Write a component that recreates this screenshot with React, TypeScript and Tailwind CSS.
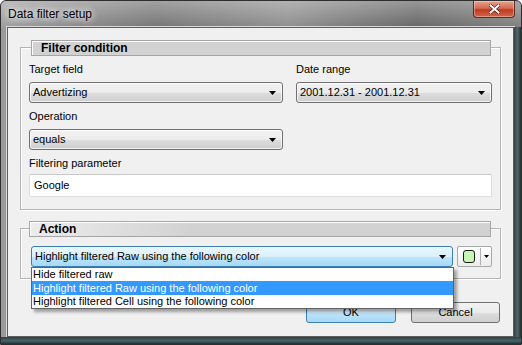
import React from "react";

const font = "font-['Liberation_Sans',Arial,sans-serif]";

function Arrow() {
  return (
    <svg width="7" height="4" viewBox="0 0 7 4" aria-hidden="true">
      <path d="M0 0h7L3.5 4z" fill="#000" />
    </svg>
  );
}

function Combo({ value }: { value: string }) {
  return (
    <div className="flex h-[21px] items-center justify-between rounded-[3px] border border-[#707070] bg-[linear-gradient(180deg,#f3f3f3_0%,#ebebeb_50%,#dddddd_51%,#cfcfcf_100%)] pl-[3px] pr-[6px] shadow-[inset_0_0_0_1px_rgba(255,255,255,0.7)]">
      <span className="text-[11px] leading-none text-black">{value}</span>
      <Arrow />
    </div>
  );
}

function GroupHeader({ title, className }: { title: string; className: string }) {
  return (
    <div
      className={`flex items-center border border-[#a5a5a5] bg-[#d2d2d2] pl-[9px] text-[12px] font-bold leading-none text-black shadow-[inset_1px_1px_0_#ffffff] ${className}`}
    >
      {title}
    </div>
  );
}

export default function App() {
  return (
    <div className={`${font} flex h-[345px] w-[522px] flex-col overflow-hidden rounded-t-[6px] border border-[#2e2e2e] bg-[linear-gradient(90deg,#9a9a9a,#6f6f6f_30%,#8a8a8a_55%,#5f5f5f_80%,#7a7a7a)]`}>
      {/* title bar */}
      <div className="flex h-[26px] shrink-0 items-start justify-between bg-[linear-gradient(180deg,rgba(255,255,255,0.35),rgba(255,255,255,0.05))]">
        <span className="pl-[7px] pt-[7px] text-[12px] leading-none text-black [text-shadow:0_0_6px_#fff,0_0_8px_#fff]">
          Data filter setup
        </span>
        <div className="mr-[6px] flex h-[17px] w-[42px] items-center justify-center rounded-b-[4px] border border-t-0 border-[#5a2a22] bg-[linear-gradient(180deg,#e7a38f_0%,#d46a52_45%,#c0391f_55%,#d2674c_100%)] shadow-[inset_0_0_0_1px_rgba(255,255,255,0.35)]">
          <svg width="11" height="10" viewBox="0 0 11 10" aria-hidden="true">
            <path d="M1.5 1.5l8 7M9.5 1.5l-8 7" stroke="#4a1a12" strokeWidth="3.2" strokeLinecap="square" />
            <path d="M1.5 1.5l8 7M9.5 1.5l-8 7" stroke="#ffffff" strokeWidth="2" strokeLinecap="square" />
          </svg>
        </div>
      </div>

      <div className="flex min-h-0 flex-1">
        <div className="w-[6px] shrink-0" />
        {/* client area */}
        <div className="flex flex-1 flex-col border border-[#5e5e5e] bg-[#f0f0f0] px-[12px] pt-[19px] shadow-[0_0_0_1px_#d9d9d9]">
          {/* Filter condition */}
          <div className="border border-[#b5b5b5] pb-[12px] shadow-[inset_1px_1px_0_#fff,1px_1px_0_#fff]">
            <GroupHeader title="Filter condition" className="-mt-[8px] ml-[10px] mr-[9px] h-[16px]" />
            <div className="flex gap-[13px] px-[8px]">
              <div className="flex w-[254px] flex-col">
                <div className="mt-[5px] h-[16px] text-[11px] leading-[16px] text-black">Target field</div>
                <div className="mt-[5px]">
                  <Combo value="Advertizing" />
                </div>
                <div className="mt-[5px] h-[16px] text-[11px] leading-[16px] text-black">Operation</div>
                <div className="mt-[5px]">
                  <Combo value="equals" />
                </div>
              </div>
              <div className="flex flex-1 flex-col">
                <div className="mt-[5px] h-[16px] text-[11px] leading-[16px] text-black">Date range</div>
                <div className="mt-[5px]">
                  <Combo value="2001.12.31 - 2001.12.31" />
                </div>
              </div>
            </div>
            <div className="px-[8px]">
              <div className="mt-[5px] h-[16px] text-[11px] leading-[16px] text-black">Filtering parameter</div>
              <div className="mt-[3px] flex h-[23px] items-center rounded-[2px] border border-[#dcdcdc] border-t-[#c9c9c9] bg-white pl-[4px] text-[11px] text-black">
                Google
              </div>
            </div>
          </div>

          {/* Action */}
          <div className="mt-[18px] border border-[#b5b5b5] pb-[11px] shadow-[inset_1px_1px_0_#fff,1px_1px_0_#fff]">
            <GroupHeader title="Action" className="-mt-[8px] ml-[8px] mr-[9px] h-[16px] bg-[linear-gradient(90deg,#ececec,#d2d2d2_35%)]" />
            <div className="mt-[9px] flex gap-[4px] pl-[10px]">
              <div className="relative w-[422px]">
                <div className="flex h-[21px] items-center justify-between rounded-[3px] border border-[#3c7fb1] bg-[linear-gradient(180deg,#eaf6fd_0%,#d9f0fc_50%,#bee6fd_51%,#a7d9f5_100%)] pl-[3px] pr-[6px]">
                  <span className="text-[11px] leading-none text-black">Highlight filtered Raw using the following color</span>
                  <Arrow />
                </div>
                <div className="absolute left-0 top-[21px] z-10 w-[423px] border border-[#646464] bg-white py-0 shadow-[3px_3px_3px_rgba(0,0,0,0.35)]">
                  <div className="h-[13px] pl-[1px] text-[11px] leading-[13px] text-black">Hide filtered raw</div>
                  <div className="h-[14px] bg-[#3399ff] pl-[1px] text-[11px] leading-[14px] text-white">
                    Highlight filtered Raw using the following color
                  </div>
                  <div className="h-[13px] pl-[1px] text-[11px] leading-[13px] text-black">
                    Highlight filtered Cell using the following color
                  </div>
                </div>
              </div>
              <div className="flex h-[21px] w-[35px] items-center rounded-[2px] border border-[#a8a8a8] bg-[linear-gradient(180deg,#ffffff,#ececec)] pl-[5px]">
                <div className="h-[13px] w-[12px] rounded-[3px] border border-[#1a1a1a] bg-[#c8f7b4]" />
                <div className="ml-[5px] h-[17px] w-px bg-[#b0b0b0]" />
                <div className="ml-[3px] flex items-center">
                  <svg width="5" height="3" viewBox="0 0 5 3" aria-hidden="true">
                    <path d="M0 0h5L2.5 3z" fill="#000" />
                  </svg>
                </div>
              </div>
            </div>
          </div>

          {/* buttons */}
          <div className="mt-[23px] flex justify-end gap-[15px] pr-[1px]">
            <div className="flex h-[21px] w-[90px] items-center justify-center rounded-[3px] border border-[#3c7fb1] bg-[linear-gradient(180deg,#eaf6fd_0%,#d9f0fc_50%,#bee6fd_51%,#a7d9f5_100%)] text-[11px] text-black">
              OK
            </div>
            <div className="flex h-[21px] w-[89px] items-center justify-center rounded-[3px] border border-[#707070] bg-[linear-gradient(180deg,#f2f2f2_0%,#ebebeb_50%,#dddddd_51%,#cfcfcf_100%)] text-[11px] text-black">
              Cancel
            </div>
          </div>
        </div>
        <div className="w-[7px] shrink-0 bg-[linear-gradient(90deg,#3d3d3d,#4a6a70_50%,#2d2d2d)]" />
      </div>
      <div className="h-[7px] shrink-0 bg-[linear-gradient(180deg,#3a3a3a,#3f6870_55%,#2a2a2a)]" />
    </div>
  );
}
